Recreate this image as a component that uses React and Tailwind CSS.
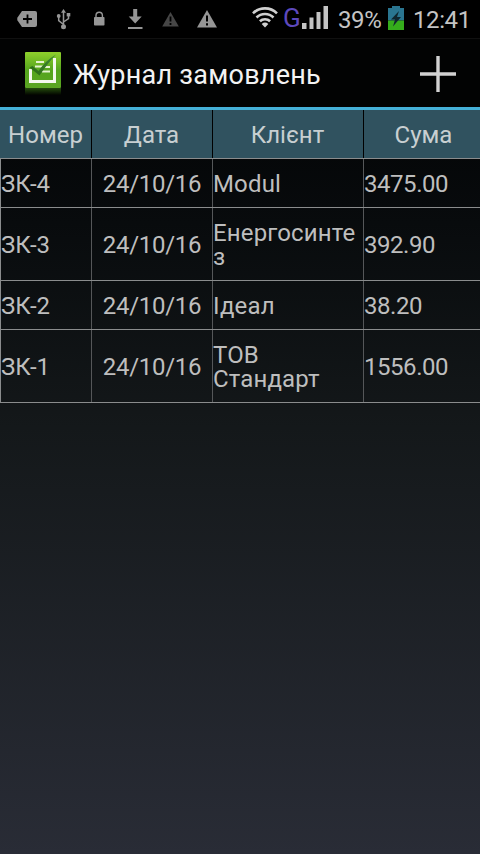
import React from 'react';

const orders = [
  { id: 'ЗК-4', date: '24/10/16', client: 'Modul', sum: '3475.00' },
  { id: 'ЗК-3', date: '24/10/16', client: 'Енергосинте\nз', sum: '392.90' },
  { id: 'ЗК-2', date: '24/10/16', client: 'Ідеал', sum: '38.20' },
  { id: 'ЗК-1', date: '24/10/16', client: 'ТОВ\nСтандарт', sum: '1556.00' },
];

function NotificationIcons() {
  return (
    <svg width="240" height="38" viewBox="0 0 240 38" fill="#969696">
      {/* tag with a plus */}
      <path d="M22 11h13q2 0 2 2v12q0 2-2 2H22l-4.500-6.500q-.6-1.500 0-3z" />
      <path d="M27.500 14.500v9M23 19h9" stroke="#000" strokeWidth="1.800" />
      {/* usb */}
      <path
        d="M63.500 12v14M63.500 24.500l-4.800-3.800v-4M63.500 22l5-3.500v-3"
        fill="none"
        stroke="#969696"
        strokeWidth="1.500"
      />
      <path d="M63.500 9l2.500 3.800h-5z" />
      <circle cx="63.500" cy="26.800" r="2.500" />
      <circle cx="58.700" cy="16" r="1.900" />
      <path d="M66.700 13h3.600v3.400h-3.600z" />
      {/* lock */}
      <rect x="94" y="17" width="10.500" height="8.500" rx="0.800" />
      <path d="M96 17.500v-2a3.200 3.200 0 0 1 6.400 0v2" fill="none" stroke="#969696" strokeWidth="1.400" />
      {/* download */}
      <path d="M133.200 9h4v7.500h4.500l-6.500 7-6.500-7h4.500z" />
      <path d="M128 27h14.500v2H128z" />
      {/* warnings */}
      <path d="M170.500 12l8.300 14.500h-16.600z" fill="#464646" />
      <path d="M170.500 16.500v5M170.500 23v2" stroke="#000" strokeWidth="1.800" />
      <path d="M207 10l10 17.500h-20z" />
      <path d="M207 15.500v6M207 23.300v2.200" stroke="#000" strokeWidth="2" />
    </svg>
  );
}

function WifiIcon() {
  return (
    <svg width="26" height="22" viewBox="0 0 26 22" fill="none" stroke="#d0d0d0" strokeWidth="2.600">
      <path d="M1 6.300a17 17 0 0 1 24 0" />
      <path d="M4.500 10.500a12 12 0 0 1 17 0" />
      <path d="M7.900 14.300a7.300 7.300 0 0 1 10.200 0" />
      <path d="M13 20.500l-3.300-3.600a5 5 0 0 1 6.600 0z" fill="#d0d0d0" stroke="none" />
    </svg>
  );
}

function SignalIcon() {
  return (
    <svg width="27" height="24" viewBox="0 0 27 24" fill="#c4c4c4">
      <path d="M0 17h4.500v6H0zM7.500 11.500h4V23h-4zM14.500 6h4v17h-4zM21.500 0h4.500v23h-4.500z" />
    </svg>
  );
}

function BatteryIcon() {
  return (
    <svg width="16" height="24" viewBox="0 0 16 24">
      <path d="M4 0h8v2h4v12.500H0V2h4z" fill="#2a7590" />
      <path d="M0 14.500h16V24H0z" fill="#35ad1b" />
      <path d="M11 5L3 13.500h4L5 20.500l8-9.500H9z" fill="#10262e" />
    </svg>
  );
}

function AppIcon() {
  return (
    <svg width="36" height="44" viewBox="0 0 36 44">
      <defs>
        <linearGradient id="tile" x1="0" y1="0" x2="0" y2="1">
          <stop offset="0" stopColor="#8fd02c" />
          <stop offset="0.500" stopColor="#55a51d" />
          <stop offset="1" stopColor="#5aa522" />
        </linearGradient>
        <linearGradient id="check" x1="0" y1="1" x2="1" y2="0">
          <stop offset="0" stopColor="#2c6a12" />
          <stop offset="1" stopColor="#3f8a3a" />
        </linearGradient>
        <linearGradient id="reflection" x1="0" y1="0" x2="0" y2="1">
          <stop offset="0" stopColor="#234a0c" />
          <stop offset="1" stopColor="#020400" />
        </linearGradient>
      </defs>
      <rect width="36" height="36" rx="1" fill="url(#tile)" />
      <rect y="36" width="36" height="7" fill="url(#reflection)" />
      <path d="M5.500 17v12.500h24V6" fill="none" stroke="#f4f8ee" strokeWidth="3" />
      <path d="M11 10h8M10 14.500h8M19 15h6M17 19.500h8" stroke="#e4f2d0" strokeWidth="2" />
      <path d="M4.500 15.500l3-1.500 6 5Q20 9 31 2.500 23 11 14.500 23.500z" fill="url(#check)" />
    </svg>
  );
}

function StatusBar() {
  return (
    <div className="h-[38px] flex bg-black text-[#c4c4c4] text-2xl overflow-hidden">
      <NotificationIcons />
      <div className="flex items-start ml-3 whitespace-nowrap">
        <div className="mt-[7px]"><WifiIcon /></div>
        <span className="w-[17px] ml-[5px] text-[#5d49bd] text-[26px] leading-9">G</span>
        <div className="mt-[6px] ml-[2px]"><SignalIcon /></div>
        <span className="w-[43px] ml-[9px] leading-[41px] tracking-[-0.4px]">39%</span>
        <div className="mt-[6px] ml-[7px]"><BatteryIcon /></div>
        <span className="ml-[9px] leading-[41px] tracking-[-0.4px]">12:41</span>
      </div>
    </div>
  );
}

export default function App() {
  return (
    <div className="w-[480px] h-[854px] overflow-hidden bg-linear-to-b from-[#020304] from-5% via-[#14181a] via-50% to-[#292c36] font-['Roboto',sans-serif]">
      <StatusBar />
      <header className="h-[72px] flex items-start bg-[#020303] border-t border-t-[#101010] border-b-3 border-b-[#45b1d8]">
        <div className="mt-[13px] ml-[25px]"><AppIcon /></div>
        <h1 className="ml-3 mt-[18px] text-[27px] leading-9 tracking-[0.25px] text-[#f3f3f3] whitespace-nowrap">Журнал замовлень</h1>
        <button className="ml-auto mr-6 mt-[17px]">
          <svg width="36" height="36" viewBox="0 0 36 36" fill="#d2d2d2">
            <path d="M16.300 0h3.400v36h-3.400zM0 16.300h36v3.400H0z" />
          </svg>
        </button>
      </header>

      <div className="text-2xl leading-6 text-[#bebebe]">
        <div className="grid grid-cols-[91px_121px_151px_1fr] bg-[#30525f] text-[#c8cfd1] text-center leading-[50px]">
          <div className="h-12 border-r border-black -mr-px">Номер</div>
          <div className="h-12 border-r border-black -mr-px">Дата</div>
          <div className="h-12 border-r border-black -mr-px">Клієнт</div>
          <div className="h-12 pl-1">Сума</div>
        </div>
        <div className="border-t border-l border-[#8a8c8d]">
          {orders.map((order) => (
            <div key={order.id} className="grid grid-cols-[91px_121px_151px_1fr] border-b border-[#8a8c8d]">
              <div className="flex items-center pt-0.5 border-r border-[#555759]">{order.id}</div>
              <div className="flex items-center justify-center pt-0.5 border-r border-[#555759] tracking-[-0.3px]">{order.date}</div>
              <div className="pt-[13px] pb-[11px] border-r border-[#555759] tracking-[0.15px] whitespace-pre-line">{order.client}</div>
              <div className="flex items-center pt-0.5 tracking-[-0.45px]">{order.sum}</div>
            </div>
          ))}
        </div>
      </div>
    </div>
  );
}
